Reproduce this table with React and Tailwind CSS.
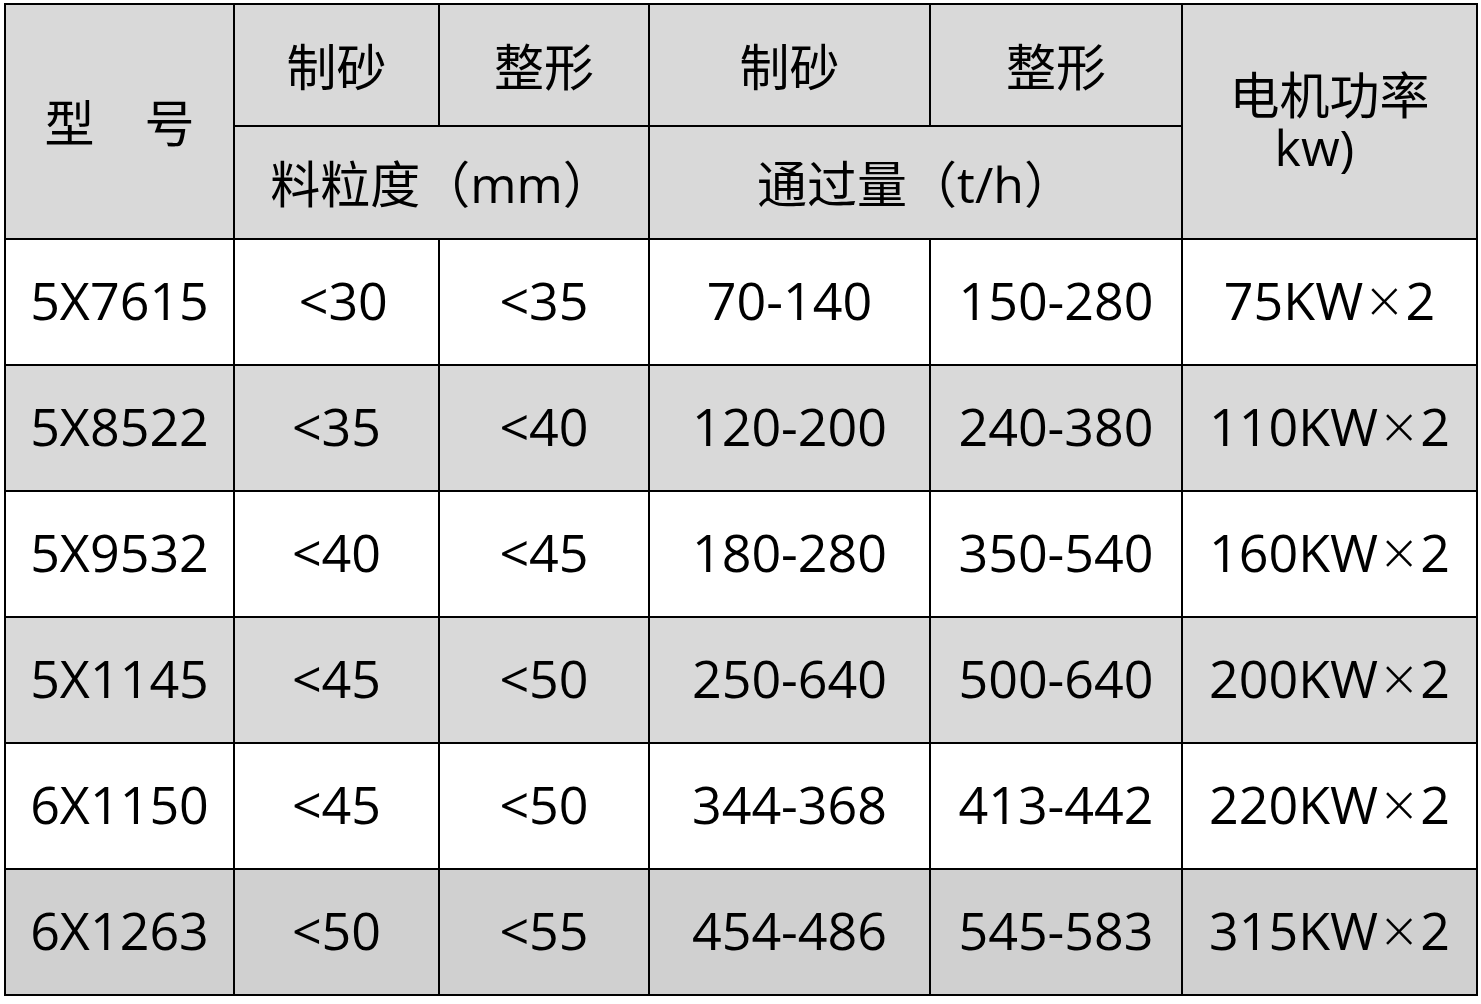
import React from 'react';

const rows = [
    ['5X7615', '\u00a0<30', '<35', '70-140', '150-280', '75KW'],
    ['5X8522', '<35', '<40', '120-200', '240-380', '110KW'],
    ['5X9532', '<40', '<45', '180-280', '350-540', '160KW'],
    ['5X1145', '<45', '<50', '250-640', '500-640', '200KW'],
    ['6X1150', '<45', '<50', '344-368', '413-442', '220KW'],
    ['6X1263', '<50', '<55', '454-486', '545-583', '315KW'],
];

const rowBg = ['bg-white', 'bg-[#d9d9d9]', 'bg-white', 'bg-[#d9d9d9]', 'bg-white', 'bg-[#d0d0d0]'];

const Cell = ({ className = '', children }) => (
    <div className={`flex items-center justify-center text-black ${className}`}>{children}</div>
);

export default function App() {
    return (
        <div className="w-[1481px] h-[1004px] bg-white pt-[3px] pl-[4px]" style={{ fontFamily: "'Open Sans', 'Noto Sans CJK SC', sans-serif" }}>
            <div className="grid w-[1474px] bg-black p-[2px] gap-[2px] grid-cols-[227px_203px_208px_279px_250px_293px] grid-rows-[120px_111px_repeat(6,124px)]">
                <Cell className="row-span-2 bg-[#d9d9d9] text-[50px] leading-none pt-[2px]">型{'\u3000'}号</Cell>
                <Cell className="bg-[#d9d9d9] text-[50px] leading-none pt-[4px]">制砂</Cell>
                <Cell className="bg-[#d9d9d9] text-[50px] leading-none pt-[4px]">整形</Cell>
                <Cell className="bg-[#d9d9d9] text-[50px] leading-none pt-[4px]">制砂</Cell>
                <Cell className="bg-[#d9d9d9] text-[50px] leading-none pt-[4px]">整形</Cell>
                <Cell className="row-span-2 bg-[#d9d9d9] text-[50px] leading-none pb-[4px]">
                    <div className="flex flex-col items-center gap-[6px]">
                        <span className="block h-[46px]">电机功率</span>
                        <span className="block h-[48px] mr-[30px]">kw)</span>
                    </div>
                </Cell>
                <Cell className="col-span-2 bg-[#d9d9d9] text-[50px] leading-none pt-[2px]">料粒度（mm）</Cell>
                <Cell className="col-span-2 bg-[#d9d9d9] text-[50px] leading-none pt-[2px]">通过量（t/h）</Cell>
                {rows.map((r, i) =>
                    r.map((v, j) => (
                        <Cell key={`${i}-${j}`} className={`${rowBg[i]} text-[52px] leading-none pb-[5px]`}>
                            {v}
                            {j === 5 && (
                                <>
                                    <span className="mx-[4px] text-[60px] font-light">×</span>2
                                </>
                            )}
                        </Cell>
                    ))
                )}
            </div>
        </div>
    );
}
